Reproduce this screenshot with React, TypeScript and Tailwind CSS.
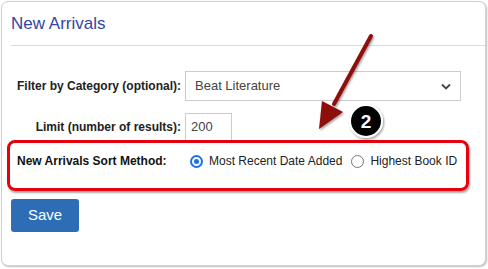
import React from "react";

function Radio({ checked }: { checked: boolean }) {
  if (checked) {
    return (
      <span className="w-[13px] h-[13px] rounded-full border-[2px] border-[#1a73e8] bg-white flex items-center justify-center shrink-0">
        <span className="block w-[5px] h-[5px] rounded-full bg-[#1a73e8]" />
      </span>
    );
  }
  return <span className="block w-[13px] h-[13px] rounded-full border border-[#767676] bg-white shrink-0" />;
}

export default function App() {
  return (
    <div
      className="relative w-[488px] h-[269px] bg-white pt-[1px] pl-[1px] overflow-hidden"
      style={{ fontFamily: '"Liberation Sans", Arial, sans-serif' }}
    >
      <div className="w-[485px] h-[265px] border border-[#cfcfcf] rounded-[7px] shadow-[1px_1px_2px_rgba(0,0,0,0.25)] bg-white">
        <div className="ml-[9px] pt-[12px] pb-[11px] border-b border-[#dadada]">
          <div className="text-[17px] leading-[20px] text-[#3445a3]">New Arrivals</div>
        </div>
        <div className="pl-[9px] flex flex-col">
          <div className="mt-[25px] flex items-center gap-[4px]">
            <div className="w-[170px] text-right text-[12px] font-bold text-[#222]">Filter by Category (optional):</div>
            <div className="w-[276px] h-[30px] border border-[#cccccc] flex items-center justify-between pl-[9px] pr-[9px] text-[13px] text-[#444]">
              <span>Beat Literature</span>
              <svg width="10" height="7" viewBox="0 0 10 7">
                <path d="M1 1.5 L5 5.5 L9 1.5" fill="none" stroke="#444" strokeWidth="1.8" />
              </svg>
            </div>
          </div>
          <div className="mt-[12px] flex items-center gap-[4px]">
            <div className="w-[170px] text-right text-[12px] font-bold text-[#222]">Limit (number of results):</div>
            <div className="w-[47px] h-[28px] border border-[#cccccc] flex items-center pl-[5px] text-[13px] text-[#444]">200</div>
          </div>
          <div className="-mt-[1px] -ml-[4px] w-[462px] h-[51px] border-[3px] border-[#e5000b] rounded-[8px] shadow-[1px_2px_2px_rgba(0,0,0,0.35)] pl-[7px] pt-[10px]">
            <div className="flex items-center h-[16px]">
              <div className="w-[173px] text-[12px] font-bold text-[#111]">New Arrivals Sort Method:</div>
              <Radio checked />
              <span className="ml-[6px] text-[12px] text-[#222]">Most Recent Date Added</span>
              <span className="ml-[9px] flex"><Radio checked={false} /></span>
              <span className="ml-[6px] text-[12px] text-[#222]">Highest Book ID</span>
            </div>
          </div>
          <div className="mt-[8px] w-[68px] h-[33px] bg-[#2d6db5] rounded-[3px] flex items-center justify-center text-white text-[15px]">
            Save
          </div>
        </div>
      </div>
      <svg className="absolute left-0 top-0 pointer-events-none" width="488" height="269" viewBox="0 0 488 269">
        <defs>
          <filter id="sh" x="-50%" y="-50%" width="200%" height="200%">
            <feDropShadow dx="1" dy="1.5" stdDeviation="1.2" floodColor="#000" floodOpacity="0.4" />
          </filter>
        </defs>
        <g filter="url(#sh)">
          <line x1="371" y1="36" x2="334" y2="104" stroke="#8e0b0b" strokeWidth="4" strokeLinecap="round" />
          <polygon points="319,129 322,101 343,112" fill="#8e0b0b" />
        </g>
        <g filter="url(#sh)">
          <circle cx="366" cy="121" r="16" fill="#000" stroke="#fff" strokeWidth="2" />
        </g>
        <text
          x="366"
          y="128"
          textAnchor="middle"
          fill="#fff"
          fontSize="19"
          fontWeight="bold"
          fontFamily='"Liberation Sans", Arial, sans-serif'
        >
          2
        </text>
      </svg>
    </div>
  );
}
